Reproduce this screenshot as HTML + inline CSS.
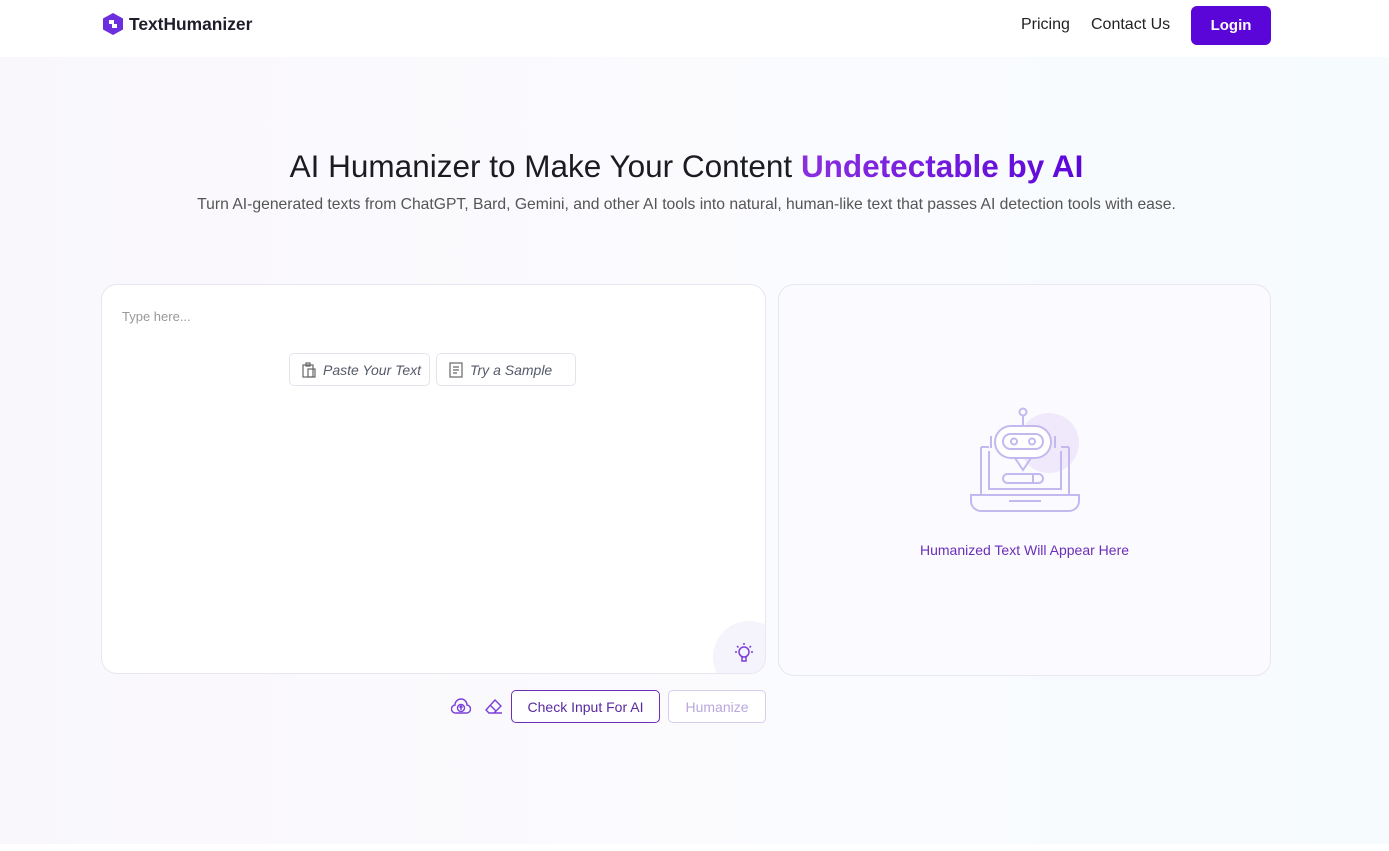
<!DOCTYPE html>
<html><head><meta charset="utf-8"><style>
*{box-sizing:border-box;margin:0;padding:0}
body{width:1389px;height:851px;overflow:hidden;font-family:"Liberation Sans",sans-serif;background:#fff;position:relative}
.hdr{position:absolute;left:0;top:0;width:1389px;height:57px;background:#fff}
.main{position:absolute;left:0;top:57px;width:1389px;height:787px;background:linear-gradient(90deg,#f9f7fc 0%,#fbfbfe 50%,#f6fbfd 100%)}
.logo{position:absolute;left:101px;top:12px;display:flex;align-items:center;gap:4px;font-weight:bold;font-size:17.4px;color:#1d1d2b}
.nav{position:absolute;top:16px;font-size:16px;color:#222}
.login{position:absolute;left:1191px;top:6px;width:80px;height:39px;background:#5b06d9;color:#fff;border-radius:6px;font-weight:bold;font-size:15px;display:flex;align-items:center;justify-content:center}
h1{position:absolute;top:148px;width:1389px;left:-8px;text-align:center;font-size:31.5px;font-weight:normal;color:#1b1b22}
h1 span{background:linear-gradient(90deg,#8a2fe0,#5b06d9);-webkit-background-clip:text;color:transparent;font-weight:bold}
.sub{position:absolute;top:196px;width:1389px;left:-8px;text-align:center;font-size:15.7px;color:#555}
.box{position:absolute;background:#fff;border:1px solid #e8e6ef;border-radius:16px}
.btn{position:absolute;height:33px;border:1px solid #e5e3ec;border-radius:5px;font-style:italic;font-size:14px;color:#555a6a;display:flex;align-items:center;gap:7px;padding-left:12px;background:#fff}
</style></head><body>
<div class="hdr"></div>
<div class="main"></div>
<div class="logo"><svg width="24" height="24" viewBox="0 0 24 24"><path d="M12 1 L22 6.5 V17.5 L12 23 L2 17.5 V6.5Z" fill="#6d2ee0"/><path d="M8 8 h5 v4 h3 v4 h-5 v-4 h-3z" fill="#fff"/></svg>TextHumanizer</div>
<div class="nav" style="left:1021px">Pricing</div>
<div class="nav" style="left:1091px">Contact Us</div>
<div class="login">Login</div>
<h1>AI Humanizer to Make Your Content <span>Undetectable by AI</span></h1>
<div class="sub">Turn AI-generated texts from ChatGPT, Bard, Gemini, and other AI tools into natural, human-like text that passes AI detection tools with ease.</div>
<div class="box" style="left:101px;top:284px;width:665px;height:390px;overflow:hidden">
<div style="position:absolute;left:20px;top:24px;font-size:13px;color:#999">Type here...</div>
<div style="position:absolute;right:-20px;bottom:-20px;width:72px;height:72px;border-radius:50%;background:#f5f3fb"></div>
<svg style="position:absolute;left:632px;top:356px" width="20" height="24" viewBox="0 0 20 24" fill="none" stroke="#7a3fd8" stroke-width="1.5"><circle cx="10" cy="11" r="5"/><path d="M8 16v4h4v-4M10 2v2M3 5l1.5 1.5M17 5l-1.5 1.5M1 11h2M17 11h2"/></svg>
</div>
<div class="btn" style="left:289px;top:353px;width:141px"><svg width="14" height="16" fill="none" stroke="#666" stroke-width="1.2"><rect x="1" y="3" width="10" height="12"/><rect x="6" y="7" width="7" height="8"/><rect x="4" y="1" width="4" height="3"/></svg>Paste Your Text</div>
<div class="btn" style="left:436px;top:353px;width:140px"><svg width="14" height="16" fill="none" stroke="#666" stroke-width="1.2"><rect x="1" y="1" width="12" height="14"/><path d="M4 5h6M4 8h6M4 11h4"/></svg>Try a Sample</div>
<div class="box" style="left:778px;top:284px;width:493px;height:392px;background:#fbfaff">
<svg style="position:absolute;left:190px;top:122px" width="112" height="106" viewBox="0 0 112 106" fill="none" stroke="#c4b9ef" stroke-width="2"><circle cx="80" cy="36" r="30" fill="#efe9fb" stroke="none"/><path d="M12 40h8M92 40h8M12 40v48M100 40v48M20 44v38h72V44"/><path d="M2 88h108v6a10 10 0 0 1-10 10H12A10 10 0 0 1 2 94z"/><path d="M40 94h32"/><circle cx="54" cy="5" r="3.5"/><path d="M54 9v10"/><rect x="26" y="19" width="56" height="32" rx="16" fill="#fff"/><rect x="34" y="27" width="40" height="15" rx="7.5"/><circle cx="45" cy="34.5" r="3"/><circle cx="63" cy="34.5" r="3"/><path d="M22 29v12M86 29v12M46 51l8 12 8-12"/><rect x="34" y="67" width="40" height="9" rx="4.5"/><path d="M64 67v9"/></svg>
<div style="position:absolute;top:257px;width:100%;text-align:center;font-size:14px;color:#6b2fb8">Humanized Text Will Appear Here</div>
</div>
<svg style="position:absolute;left:451px;top:697px" width="20" height="18" fill="none" stroke="#7a3fd8" stroke-width="1.4"><path d="M5 16a4 4 0 0 1-1-8 6 6 0 0 1 12 0 4 4 0 0 1-1 8z"/><circle cx="10" cy="11" r="3.5"/><path d="M10 13V9M8.5 10.5L10 9l1.5 1.5"/></svg>
<svg style="position:absolute;left:485px;top:698px" width="18" height="17" fill="none" stroke="#7a3fd8" stroke-width="1.4"><path d="M10 2l6 6-7 7H4l-3-3z M5 7l6 6M5 15h12"/></svg>
<div style="position:absolute;left:511px;top:690px;width:149px;height:33px;border:1px solid #6b2fb8;border-radius:5px;color:#5a2aa0;font-size:14px;display:flex;align-items:center;justify-content:center;background:#fff">Check Input For AI</div>
<div style="position:absolute;left:668px;top:690px;width:98px;height:33px;border:1px solid #d8cdef;border-radius:5px;color:#b9a7de;font-size:14px;display:flex;align-items:center;justify-content:center;background:#fff">Humanize</div>
</body></html>
